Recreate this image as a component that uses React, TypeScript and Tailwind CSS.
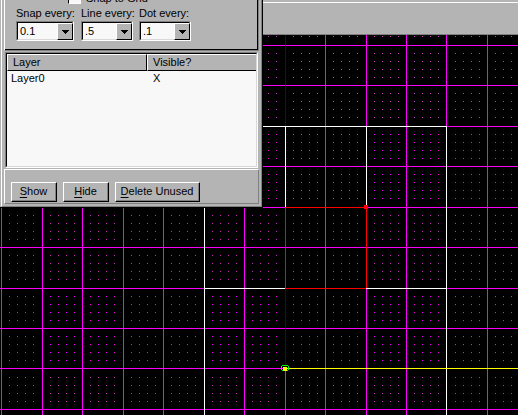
import React from "react";

const columns = [1, 42, 82, 123, 163, 204, 244, 285, 325, 366, 406, 446, 487, 527];
const rows = [45, 85, 126, 166, 207, 247, 288, 328, 368, 409];
const steps = [0, 8, 16, 24];

const dotStart = (line: number) => (line === 446 || line === 368 ? line + 9 : line + 8);
const dotColumns = columns.flatMap((c) => steps.map((s) => dotStart(c) + s));
const dotRows = [36, ...rows.flatMap((r) => steps.map((s) => dotStart(r) + s))];

const brightColumn = (x: number) =>
  (x > 42 && x < 123) || (x > 204 && x < 285) || (x > 366 && x < 446);
const isBright = (x: number, y: number) =>
  (y > 288 && y < 368 && brightColumn(x)) || (y > 126 && y < 207 && x > 204 && brightColumn(x));

type Segment = [x: number, y: number, w: number, h: number, color: string];
const segments: Segment[] = [
  [285, 0, 1, 126, "#0000c8"],
  [285, 288, 1, 80, "#0000c8"],
  [204, 207, 1, 300, "#ffffff"],
  [446, 126, 1, 400, "#ffffff"],
  [204, 126, 243, 1, "#ffffff"],
  [204, 288, 81, 1, "#ffffff"],
  [366, 288, 81, 1, "#ffffff"],
  [285, 126, 1, 81, "#ffffff"],
  [366, 126, 1, 81, "#ffffff"],
  [285, 207, 82, 1, "#ff0000"],
  [285, 288, 81, 1, "#ff0000"],
  [285, 207, 1, 81, "#ff0000"],
  [366, 207, 1, 81, "#ff0000"],
  [285, 368, 2000, 1, "#ffff00"],
  [364, 205, 4, 4, "#ff0000"],
  [283, 367, 4, 4, "#ffff00"],
  [282, 365, 6, 1, "#00ff00"],
  [281, 366, 1, 4, "#00ff00"],
  [288, 366, 1, 4, "#00ff00"],
  [282, 370, 1, 1, "#00ff00"],
  [287, 370, 1, 1, "#00ff00"],
];

function Drawing() {
  return (
    <svg className="absolute inset-0 h-full w-full" shapeRendering="crispEdges" aria-label="Drawing grid">
      {dotRows.map((y) =>
        dotColumns.map((x) => (
          <rect key={`${x}-${y}`} x={x} y={y} width="1" height="1" fill={isBright(x, y) ? "#ff00ff" : "#c832c8"} />
        )),
      )}
      {columns.map((x) => (
        <rect key={x} x={x} y="0" width="1" height="100%" fill="#ff00ff" />
      ))}
      {rows.map((y) => (
        <rect key={y} x="0" y={y} width="100%" height="1" fill="#ff00ff" />
      ))}
      {segments.map(([x, y, w, h, color], i) => (
        <rect key={i} x={x} y={y} width={w} height={h} fill={color} />
      ))}
    </svg>
  );
}

function Combo({ label, value, className }: { label: string; value: string; className: string }) {
  return (
    <label className={`block ${className}`}>
      <span className="block h-4 whitespace-nowrap leading-4">{label}</span>
      <span className="relative block h-5 border border-t-[#808080] border-l-[#808080] border-r-white border-b-white">
        <select
          defaultValue={value}
          className="block h-full w-full appearance-none border border-t-black border-l-black border-r-[#d8d8d8] border-b-[#d8d8d8] bg-[#f8f8f8] pl-0.5 leading-4 outline-none"
        >
          <option>{value}</option>
        </select>
        <span className="pointer-events-none absolute top-px right-0 flex h-[17px] w-4 items-center justify-center border border-t-white border-l-white border-r-black border-b-black bg-[#b4b4b4]">
          <svg width="7" height="4" viewBox="0 0 7 4" shapeRendering="crispEdges" aria-hidden="true">
            <path d="M0 0h7v1H0zM1 1h5v1H1zM2 2h3v1H2zM3 3h1v1H3z" />
          </svg>
        </span>
      </span>
    </label>
  );
}

function PushButton({ hotkey, rest, className }: { hotkey: string; rest: string; className: string }) {
  return (
    <button
      type="button"
      className={`h-5 border border-t-white border-l-white border-r-black border-b-black bg-[#b4b4b4] ${className}`}
    >
      <span className="flex h-full items-center justify-center border-r border-b border-[#808080] whitespace-nowrap">
        <span>
          <span className="underline underline-offset-2">{hotkey}</span>
          {rest}
        </span>
      </span>
    </button>
  );
}

function LayersWindow() {
  return (
    <section className="absolute top-0 left-0 w-[263px] overflow-hidden border-r border-b border-black bg-[#b4b4b4] pl-px">
      <div className="border-r border-b border-l border-r-[#808080] border-b-[#808080] border-l-white px-0.5 pb-0.5">
        <div className="h-[51px] border-r border-b border-l border-r-[#808080] border-b-[#808080] border-l-white">
          <div className="h-[50px] border-r border-b border-black">
            <label className="ml-[63px] flex h-1 items-end gap-[5px]">
              <input
                type="checkbox"
                defaultChecked
                className="h-[13px] w-[13px] shrink-0 appearance-none border border-t-[#808080] border-l-black border-r-white border-b-white bg-[#f8f8f8]"
              />
              <span className="leading-3 whitespace-nowrap">Snap to Grid</span>
            </label>
            <div className="mt-px ml-[11px] flex">
              <Combo label="Snap every:" value="0.1" className="mr-[7px] w-[58px]" />
              <Combo label="Line every:" value=".5" className="mr-1.5 w-[52px]" />
              <Combo label="Dot every:" value=".1" className="w-[52px]" />
            </div>
          </div>
        </div>

        <div className="mx-px mt-px h-[116px] border border-t-[#808080] border-l-[#808080] border-r-white border-b-white">
          <div className="h-[114px] border border-t-black border-l-black border-r-[#d8d8d8] border-b-[#d8d8d8] bg-[#f8f8f8]">
            <table className="w-full table-fixed border-separate border-spacing-0 text-left">
              <thead>
                <tr>
                  <th className="h-[17px] w-[140px] border-t border-r border-b border-l border-t-white border-r-black border-b-black border-l-white bg-[#b4b4b4] p-0 pl-[5px] leading-[15px] font-normal">
                    Layer
                  </th>
                  <th className="h-[17px] border-t border-b border-l border-t-white border-b-black border-l-white bg-[#b4b4b4] p-0 pl-[5px] leading-[15px] font-normal">
                    Visible?
                  </th>
                </tr>
              </thead>
              <tbody>
                <tr>
                  <td className="p-0 pl-1 leading-[15px]">Layer0</td>
                  <td className="p-0 pl-1.5 leading-[15px]">X</td>
                </tr>
              </tbody>
            </table>
          </div>
        </div>

        <div className="mt-px flex h-[35px] items-start gap-1.5 border border-t-white border-l-white border-r-[#808080] border-b-[#808080] pt-3 pl-1.5">
          <PushButton hotkey="S" rest="how" className="w-[46px]" />
          <PushButton hotkey="H" rest="ide" className="w-[46px]" />
          <PushButton hotkey="D" rest="elete Unused" className="w-[85px]" />
        </div>
      </div>
    </section>
  );
}

export default function App() {
  return (
    <main className="relative min-h-screen overflow-hidden bg-black font-['Liberation_Sans',Arial,sans-serif] text-[11px] text-black">
      <Drawing />
      <header className="relative h-[35px] border-b border-[#808080] bg-[#b4b4b4] pt-0.5">
        <div className="h-px bg-white" />
      </header>
      <LayersWindow />
    </main>
  );
}
